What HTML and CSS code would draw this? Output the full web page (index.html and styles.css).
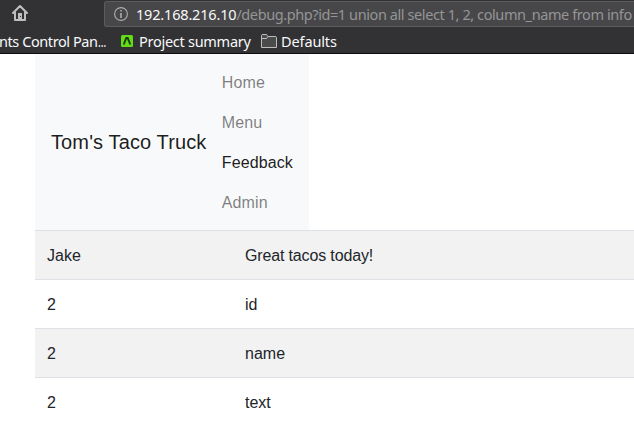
FILE: index.html
```html
<!DOCTYPE html>
<html lang="en">
<head>
<meta charset="utf-8">
<title>Tom's Taco Truck</title>
<link rel="stylesheet" href="styles.css">
</head>
<body>
<header class="browser">
  <div class="toolbar">
    <svg class="home" width="16" height="17" viewBox="0 0 16 17" fill="none" stroke="#bebebf" stroke-width="2" stroke-linejoin="round" stroke-linecap="round"><path d="M1 8 8 1l7 7M3 7.5V15h10V7.5"/><path d="M6 8h4v7H6z" fill="#bebebf" stroke="none"/><path d="M8 11h1v1H8z" fill="#323234" stroke="none"/></svg>
    <div class="address">
      <svg class="info" width="14" height="14" viewBox="0 0 14 14"><circle cx="7" cy="7" r="6.4" fill="none" stroke="#adadae" stroke-width="1.1"/><path d="M6.2 3h1.6v1.6H6.2zM6.2 6h1.6v5H6.2z" fill="#adadae"/></svg>
      <span class="host">192.168.216.10</span><span class="path">/debug.php?id=1 union all select 1, 2, column_name from info</span>
    </div>
  </div>
  <nav class="bookmarks">
    <span class="mark clipped">nts Control Pan<span class="dots">…</span></span>
    <svg class="favicon" width="12" height="12" viewBox="0 0 12 12"><rect width="12" height="12" rx="1.5" fill="#64db18"/><path d="M2.7 9.5 5.3 3h1.4l2.6 6.5" fill="none" stroke="#173b0c" stroke-width="1.9"/></svg>
    <span class="mark project">Project summary</span>
    <svg class="folder" width="16" height="14" viewBox="0 0 16 14" fill="#4b4b4c" stroke="#bdbdbe"><path d="M.5 13.5V1.2L1.2.5h4.3l1.3 2h8l.7.7v10.3z"/><path d="M.5 4.5h5l1.2-1.6"/></svg>
    <span class="mark defaults">Defaults</span>
  </nav>
</header>
<main class="page">
  <nav class="navbar">
    <a class="brand">Tom's Taco Truck</a>
    <ul class="links">
      <li>Home</li>
      <li>Menu</li>
      <li class="active">Feedback</li>
      <li>Admin</li>
    </ul>
  </nav>
  <table class="feedback">
    <tbody>
      <tr><td class="name">Jake</td><td class="message">Great tacos today!</td></tr>
      <tr><td>2</td><td>id</td></tr>
      <tr><td>2</td><td>name</td></tr>
      <tr><td>2</td><td>text</td></tr>
    </tbody>
  </table>
</main>
</body>
</html>
```
FILE: styles.css
```css
* { box-sizing: border-box; }
body {
  margin: 0;
  width: 634px;
  height: 434px;
  overflow: hidden;
  background: #fff;
  color: #212529;
  font: 16px/24px "Liberation Sans", Arial, sans-serif;
}
.browser {
  height: 54px;
  background: #323234;
  border-bottom: 1px solid #0c0c0d;
  font-family: "Noto Sans", sans-serif;
  font-size: 14.5px;
  white-space: nowrap;
  overflow: hidden;
}
.toolbar { display: flex; height: 28px; padding-top: 1px; }
.home { flex: none; margin: 4px 0 0 12px; }
.address {
  display: flex;
  align-items: center;
  flex: none;
  width: 530px;
  height: 26px;
  margin-left: 76px;
  padding-left: 9px;
  background: #474749;
  border: 1px solid #5c5c5e;
  border-right: 0;
  border-radius: 3px 0 0 3px;
}
.info { flex: none; margin-right: 8px; }
.host { color: #f9f9fa; letter-spacing: -0.18px; }
.path { color: #959596; letter-spacing: -0.41px; }
.bookmarks { display: flex; align-items: center; height: 25px; color: #f9f9fa; }
.mark { flex: none; }
.clipped { width: 121px; letter-spacing: -0.42px; text-indent: -1px; }
.dots { display: inline-block; text-indent: 0; transform: scaleX(.72); transform-origin: left; }
.favicon { flex: none; }
.project { margin-left: 6px; width: 122px; letter-spacing: -0.27px; }
.folder { flex: none; }
.defaults { margin-left: 4px; letter-spacing: -0.12px; }
.page { padding-left: 35px; }
.navbar {
  display: flex;
  align-items: center;
  width: 274px;
  height: 176px;
  padding: 8px 16px;
  background: #f8f9fa;
}
.brand { flex: none; margin-right: 15.4px; font-size: 20px; line-height: 30px; letter-spacing: .12px; color: rgba(0, 0, 0, .9); }
.links { margin: 0; padding: 0; list-style: none; letter-spacing: .1px; color: rgba(0, 0, 0, .5); }
.links li { padding: 9px 0 7px; }
.links .active { color: rgba(0, 0, 0, .9); }
.feedback { width: 599px; table-layout: fixed; border-collapse: collapse; }
.feedback td { height: 49px; padding: 13px 12px 11px; border-top: 1px solid #dee2e6; }
.feedback tr:nth-child(odd) { background: #f2f2f2; }
.feedback .name { width: 198px; }
.feedback .message { letter-spacing: -.15px; }
```
